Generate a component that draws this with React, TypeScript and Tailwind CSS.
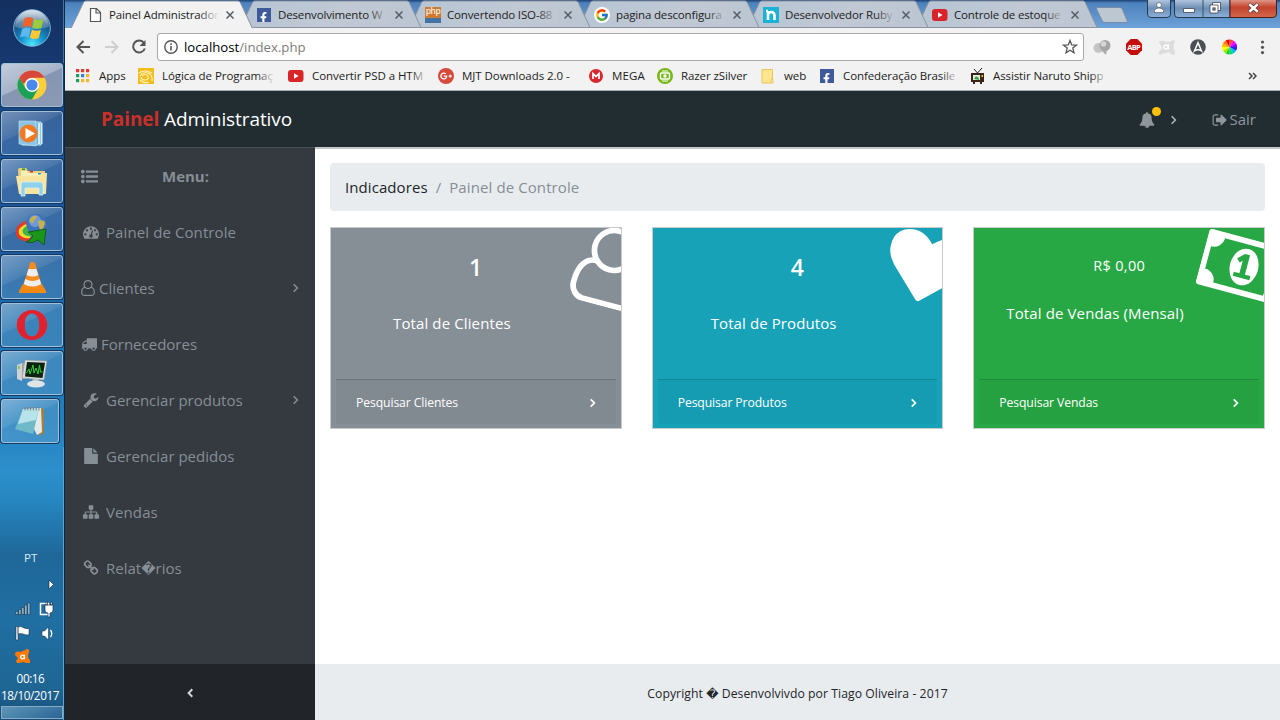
import type { ReactNode } from "react";
import { FaFacebookF, FaGooglePlusG } from "react-icons/fa";
import { FcGoogle } from "react-icons/fc";

const P = {
  bell: "M912 1696q0-16-16-16-59 0-101.5-42.5t-42.5-101.5q0-16-16-16t-16 16q0 73 51.5 124.5t124.5 51.5q16 0 16-16zm816-288q0 52-38 90t-90 38h-448q0 106-75 181t-181 75-181-75-75-181h-448q-52 0-90-38t-38-90q50-42 91-88t85-119.5 74.5-158.5 50-206 19.5-260q0-152 117-282.5t307-158.5q-8-19-8-39 0-40 28-68t68-28 68 28 28 68q0 20-8 39 190 28 307 158.5t117 282.5q0 139 19.5 260t50 206 74.5 158.5 85 119.5 91 88z",
  signOut:
    "M704 1440q0 4 1 20t.5 26.5-3 23.5-10 19.5-20.5 6.5h-320q-119 0-203.5-84.5t-84.5-203.5v-704q0-119 84.5-203.5t203.5-84.5h320q13 0 22.5 9.5t9.5 22.5q0 4 1 20t.5 26.5-3 23.5-10 19.5-20.5 6.5h-320q-66 0-113 47t-47 113v704q0 66 47 113t113 47h312l11.5 1 11.5 3 8 5.5 7 9 2 13.5zm928-544q0 26-19 45l-544 544q-19 19-45 19t-45-19-19-45v-288h-448q-26 0-45-19t-19-45v-384q0-26 19-45t45-19h448v-288q0-26 19-45t45-19 45 19l544 544q19 19 19 45z",
  list: "M384 1408q0 80-56 136t-136 56-136-56-56-136 56-136 136-56 136 56 56 136zm0-512q0 80-56 136t-136 56-136-56-56-136 56-136 136-56 136 56 56 136zm1408 416v192q0 13-9.5 22.5t-22.5 9.5h-1216q-13 0-22.5-9.5t-9.5-22.5v-192q0-13 9.5-22.5t22.5-9.5h1216q13 0 22.5 9.5t9.5 22.5zm-1408-928q0 80-56 136t-136 56-136-56-56-136 56-136 136-56 136 56 56 136zm1408 416v192q0 13-9.5 22.5t-22.5 9.5h-1216q-13 0-22.5-9.5t-9.5-22.5v-192q0-13 9.5-22.5t22.5-9.5h1216q13 0 22.5 9.5t9.5 22.5zm0-512v192q0 13-9.5 22.5t-22.5 9.5h-1216q-13 0-22.5-9.5t-9.5-22.5v-192q0-13 9.5-22.5t22.5-9.5h1216q13 0 22.5 9.5t9.5 22.5z",
  gauge:
    "M384 1152q0-53-37.5-90.5t-90.5-37.5-90.5 37.5-37.5 90.5 37.5 90.5 90.5 37.5 90.5-37.5 37.5-90.5zm192-448q0-53-37.5-90.5t-90.5-37.5-90.5 37.5-37.5 90.5 37.5 90.5 90.5 37.5 90.5-37.5 37.5-90.5zm428 481l101-382q6-26-7.5-48.5t-38.5-29.5-48 6.5-30 39.5l-101 382q-60 5-107 43.5t-63 98.5q-20 77 20 146t117 89 146-20 89-117q16-60-6-117t-72-91zm660-33q0-53-37.5-90.5t-90.5-37.5-90.5 37.5-37.5 90.5 37.5 90.5 90.5 37.5 90.5-37.5 37.5-90.5zm-640-640q0-53-37.5-90.5t-90.5-37.5-90.5 37.5-37.5 90.5 37.5 90.5 90.5 37.5 90.5-37.5 37.5-90.5zm448 192q0-53-37.5-90.5t-90.5-37.5-90.5 37.5-37.5 90.5 37.5 90.5 90.5 37.5 90.5-37.5 37.5-90.5zm320 448q0 261-141 483-19 29-54 29h-1402q-35 0-54-29-141-221-141-483 0-182 71-348t191-286 286-191 348-71 348 71 286 191 191 286 71 348z",
  truck:
    "M640 1408q0-52-38-90t-90-38-90 38-38 90 38 90 90 38 90-38 38-90zm-384-512h384v-256h-158q-13 0-22 9l-195 195q-9 9-9 22v30zm1280 512q0-52-38-90t-90-38-90 38-38 90 38 90 90 38 90-38 38-90zm256-1088v1024q0 15-4 26.5t-13.5 18.5-16.5 11.5-23.5 6-22.5 2-25.5 0-22.5-.5q0 106-75 181t-181 75-181-75-75-181h-384q0 106-75 181t-181 75-181-75-75-181h-64q-3 0-22.5.5t-25.5 0-22.5-2-23.5-6-16.5-11.5-13.5-18.5-4-26.5q0-26 19-45t45-19v-320q0-8-.5-35t0-38 2.5-34.5 6.5-37 14-30.5 22.5-30l198-198q19-19 50.5-32t58.5-13h160v-192q0-26 19-45t45-19h1024q26 0 45 19t19 45z",
  wrench:
    "M448 1472q0-26-19-45t-45-19-45 19-19 45 19 45 45 19 45-19 19-45zm644-420l-682 682q-37 37-90 37-52 0-91-37l-106-108q-38-36-38-90 0-53 38-91l681-681q39 98 114.5 173.5t173.5 114.5zm634-435q0 39-23 106-47 134-164.5 217.5t-258.5 83.5q-185 0-316.5-131.5t-131.5-316.5 131.5-316.5 316.5-131.5q58 0 121.5 16.5t107.5 46.5q16 11 16 28t-16 28l-293 169v224l193 107q5-3 79-48.5t135.5-81 70.5-35.5q15 0 23.5 10t8.5 25z",
  file: "M1152 512v-472q22 14 36 28l408 408q14 14 28 36h-472zm-128 32q0 40 28 68t68 28h544v1056q0 40-28 68t-68 28h-1344q-40 0-68-28t-28-68v-1600q0-40 28-68t68-28h800v544z",
  sitemap:
    "M1792 1248v320q0 40-28 68t-68 28h-320q-40 0-68-28t-28-68v-320q0-40 28-68t68-28h96v-192h-512v192h96q40 0 68 28t28 68v320q0 40-28 68t-68 28h-320q-40 0-68-28t-28-68v-320q0-40 28-68t68-28h96v-192h-512v192h96q40 0 68 28t28 68v320q0 40-28 68t-68 28h-320q-40 0-68-28t-28-68v-320q0-40 28-68t68-28h96v-192q0-52 38-90t90-38h512v-192h-96q-40 0-68-28t-28-68v-320q0-40 28-68t68-28h320q40 0 68 28t28 68v320q0 40-28 68t-68 28h-96v192h512q52 0 90 38t38 90v192h96q40 0 68 28t28 68z",
  link: "M1520 1216q0-40-28-68l-208-208q-28-28-68-28-42 0-72 32 3 3 19 18.5t21.5 21.5 15 19 13 25.5 3.5 27.5q0 40-28 68t-68 28q-15 0-27.5-3.5t-25.5-13-19-15-21.5-21.5-18.5-19q-33 31-33 73 0 40 28 68l206 207q27 27 68 27 40 0 68-26l147-146q28-28 28-67zm-703-705q0-40-28-68l-206-207q-28-28-68-28-39 0-68 27l-147 146q-28 28-28 67 0 40 28 68l208 208q27 27 68 27 42 0 72-31-3-3-19-18.5t-21.5-21.5-15-19-13-25.5-3.5-27.5q0-40 28-68t68-28q15 0 27.5 3.5t25.5 13 19 15 21.5 21.5 18.5 19q33-31 33-73zm895 705q0 120-85 203l-147 146q-83 83-203 83-121 0-204-85l-206-207q-83-83-83-203 0-123 88-209l-88-88q-86 88-208 88-120 0-204-84l-208-208q-84-84-84-204t85-203l147-146q83-83 203-83 121 0 204 85l206 207q83 83 83 203 0 123-88 209l88 88q86-88 208-88 120 0 204 84l208 208q84 84 84 204z",
  user: "M1329 784q47 14 89.5 38t89 73 79.5 115.5 55 172 22 236.5q0 154-100 263.5t-241 109.5h-854q-141 0-241-109.5t-100-263.5q0-131 22-236.5t55-172 79.5-115.5 89-73 89.5-38q-79-125-79-272 0-104 40.5-198.5t109.5-163.5 163.5-109.5 198.5-40.5 198.5 40.5 163.5 109.5 109.5 163.5 40.5 198.5q0 147-79 272zm-433-656q-159 0-271.5 112.5t-112.5 271.5 112.5 271.5 271.5 112.5 271.5-112.5 112.5-271.5-112.5-271.5-271.5-112.5zm427 1536q88 0 150.5-71.5t62.5-173.5q0-239-78.5-377t-225.5-145q-145 127-336 127t-336-127q-147 7-225.5 145t-78.5 377q0 102 62.5 173.5t150.5 71.5h854z",
  heart:
    "M896 1664q-26 0-44-18l-624-602q-10-8-27.5-26t-55.5-65.5-68-97.5-53.5-121-23.5-138q0-220 127-344t351-124q62 0 126.5 21.5t120 58 95.5 68.5 76 68q36-36 76-68t95.5-68.5 120-58 126.5-21.5q224 0 351 124t127 344q0 221-229 450l-623 600q-18 18-44 18z",
  money:
    "M768 1152h384v-96h-128v-448h-114l-148 137 77 80q42-37 55-57h2v288h-128v96zm512-256q0 70-21 142t-59.5 134-101.5 101-138 39-138-39-101.5-101-59.5-134-21-142 21-142 59.5-134 101.5-101 138-39 138 39 101.5 101 59.5 134 21 142zm512 256v-512q-106 0-181-75t-75-181h-1152q0 106-75 181t-181 75v512q106 0 181 75t75 181h1152q0-106 75-181t181-75zm128-832v1152q0 26-19 45t-45 19h-1792q-26 0-45-19t-19-45v-1152q0-26 19-45t45-19h1792q26 0 45 19t19 45z",
};

function Icon({ d, className = "", box = "0 0 1792 1792" }: { d: string; className?: string; box?: string }) {
  return (
    <svg viewBox={box} className={`shrink-0 ${className}`} fill="currentColor" fillRule="evenodd">
      <path d={d} />
    </svg>
  );
}

function Chevron({ className = "", weight = 1.4 }: { className?: string; weight?: number }) {
  return (
    <svg viewBox="0 0 8 10" className={`h-2.5 w-2 shrink-0 ${className}`} fill="none" stroke="currentColor">
      <path d="M1.700 1.300 5.400 5l-3.700 3.700" strokeWidth={weight} />
    </svg>
  );
}

/* ---------- Windows taskbar ---------- */

function Orb() {
  return (
    <svg viewBox="0 0 40 40" className="size-10">
      <defs>
        <radialGradient id="orb" cx=".5" cy=".95" r=".9">
          <stop offset="0" stopColor="#4fe6ff" />
          <stop offset=".35" stopColor="#1593cf" />
          <stop offset=".75" stopColor="#174d80" />
          <stop offset="1" stopColor="#5f86a6" />
        </radialGradient>
        <linearGradient id="shine" x1="0" y1="0" x2="0" y2="1">
          <stop offset="0" stopColor="#fff" stopOpacity=".75" />
          <stop offset="1" stopColor="#fff" stopOpacity=".15" />
        </linearGradient>
      </defs>
      <circle cx="20" cy="20" r="18.3" fill="url(#orb)" stroke="#7fb3d4" strokeWidth="1" />
      <path d="M3 19a17 17 0 0 1 34 0q-17 5-34 0z" fill="url(#shine)" />
      <path d="M12.500 10.500q4.500-2.500 8.700-.3l-2.200 9q-4-2-8.500.2z" fill="#f0622a" />
      <path d="M22.300 11q4 2.300 9.200 0l-2.200 8.800q-4.500 2.200-9.100-.2z" fill="#9ccb3b" />
      <path d="M10.200 21q4.200-2.200 8.500-.2l-2.100 8.600q-4.200-2.100-8.600.2z" fill="#5cb8ee" />
      <path d="M19.900 21.500q4.300 2.300 9 .2l-2.100 8.200q-4.500 2.100-9-.1z" fill="#fdc833" />
    </svg>
  );
}

const taskIcons: ReactNode[] = [
  <g key="chrome">
    <circle cx="16" cy="16" r="14.500" fill="#fccd3c" />
    <path d="M3.440 8.750A14.500 14.500 0 0 1 28.560 8.750H16a7.250 7.250 0 0 0-6.700 4.500L7 15z" fill="#d8463c" />
    <path d="M3.440 8.750A14.500 14.500 0 0 0 16 30.500l6.300-10.900H16L9.720 19.600z" fill="#1ba158" />
    <circle cx="16" cy="16" r="7" fill="#fff" />
    <circle cx="16" cy="16" r="5.600" fill="#4a87ee" />
  </g>,
  <g key="player">
    <path d="M6 5h19v23H6z" fill="#6fb5d8" stroke="#b6e0f2" />
    <path d="M22 6h2v21h-2zM25 6h1.500v21H25z" fill="#d3eef9" />
    <path d="M3 4h17v25L3 27z" fill="#8cc5e2" stroke="#c8e9f7" strokeWidth=".6" />
    <circle cx="12.500" cy="16.500" r="9" fill="#f17a22" />
    <path d="M9.500 11v11l9.500-5.500z" fill="#fff" />
  </g>,
  <g key="folders">
    <path d="M2 5q0-2 2-2h6l2 3h17v22H3z" fill="#e9cf7f" />
    <path d="M5 6h6l1 2h17v3H5z" fill="#fbf0b8" />
    <path d="M6 3.500h3V5H6z" fill="#1da01d" />
    <path d="M14 6h3v1.500h-3z" fill="#d33" />
    <path d="M22 8h3.500v1.500H22z" fill="#1c8fe0" />
    <path d="M0 11h24l1-3h6l-1 21H3z" fill="#f7e59f" />
    <path d="M5 31V19q0-2 2-2h17q3 0 3 3v10h-4v-7H9v8z" fill="#8fd0ea" stroke="#d7f3ff" strokeWidth=".8" />
  </g>,
  <g key="downloader">
    <path d="M10 8Q-2 12 0 22q3 7 13 6l2-4Q5 24 6 17q1-4 6-5z" fill="#e23a2a" />
    <path d="M10 11Q1 15 3 21q3 5 11 4l1-3q-7 0-6-5 1-3 5-4z" fill="#f3d72d" />
    <path d="M11 13q-6 3-4 7 3 4 9 3l1-3q-5 0-4-3z" fill="#3ab54a" />
    <circle cx="20.500" cy="11" r="10.300" fill="#3f73bc" />
    <circle cx="19" cy="8" r="6" fill="#8fb8ea" opacity=".6" />
    <path d="M14 6q3-4 7-3 0 3-3 4 0 3-2 3-3-1-2-4zM22 8q5-2 7 1 0 5-4 8-3-3-2-5z" fill="#c9b04e" />
    <path d="m12 19 18-3-2 16-6-5q-5 4-12 2 5-2 7-6z" fill="#1a951a" stroke="#0c4c0c" strokeWidth=".7" />
  </g>,
  <g key="cone">
    <path d="M7 23h19l4 7v2H3v-2z" fill="#f58a12" />
    <path d="M14 2q2.500-2 5 0l7 23q-9.500 5-19 0z" fill="#f78c1e" />
    <path d="M12.500 8h8l1.800 6q-5.500 3-11.700 0zM9.300 18q7 4 14.300 0l1.600 5q-8.500 5-17.500 0z" fill="#eee" />
  </g>,
  <g key="opera">
    <path
      d="M16 1C7.500 1 .8 7.500.8 16S7.500 31 16 31s15.200-6.500 15.200-15S24.500 1 16 1zm0 3.500c4.800 0 7.300 5 7.300 11.500S20.800 27.500 16 27.500 8.700 22.500 8.700 16 11.200 4.500 16 4.500z"
      fill="#e3202c"
      fillRule="evenodd"
    />
  </g>,
  <g key="monitor">
    <path d="M1 8l5-2v18l-5-2z" fill="#cfd3d5" />
    <path d="M2 9h2v3H2z" fill="#8bc53f" />
    <path d="M6 6h5v16H6z" fill="#9fa5a8" />
    <path d="m9 3 22 1-3 19-22-2z" fill="#d9dcdc" stroke="#90979b" strokeWidth=".6" />
    <path d="m11 5 18 .700-2.500 15.300-17.500-1.600z" fill="#0b2410" />
    <path d="m10.500 16 2.500-4 1 5 3-9 1 8 2-5 2 6 1.500-9 1 7h2" fill="none" stroke="#2ed13a" />
    <path d="M17 22h5l2 4h-8z" fill="#b7bdbf" />
    <ellipse cx="20" cy="27" rx="9" ry="3.500" fill="#e0e4e5" />
  </g>,
  <g key="notepad">
    <path d="m26 3 4 1v24l-5 3z" fill="#a5803c" />
    <path d="m10 4 17-1 1 24-5 3z" fill="#e4eaea" />
    <path d="M9 4h16l-6 25-18-5z" fill="#6fb9c8" />
    <path d="M9 4h16l-3 11-18 4z" fill="#b7e3ea" />
    <path d="M11 2v3.500m2.800-3.500v3.500m2.800-3.500v3.500m2.800-3.500v3.500m2.800-3.500v3.500m2.800-3.500v3.500" stroke="#777" strokeWidth=".9" />
  </g>,
];

function Taskbar() {
  return (
    <aside className="flex w-[65px] shrink-0 flex-col border-r border-[#0d2a45] bg-[linear-gradient(180deg,#13305f_0px,#16386f_60px,#1b5296_140px,#1b5799_240px,#1e70ae_320px,#237fbd_420px,#2d8fcb_470px,#2687c0_500px,#1f6799_555px,#206fa3_620px,#1e6593_690px,#174d78_720px)]">
      <div className="flex h-[63px] items-start justify-center border-r border-[#4c7199] pt-2">
        <Orb />
      </div>
      {taskIcons.map((icon, i) => (
        <div
          key={i}
          className={`mb-1 ml-px flex h-11 items-center justify-center rounded-[3px] border border-[#9fc0dc] shadow-[0_0_0_1px_#173a62] ${
            i === 7 ? "w-[58px]" : "w-[62px]"
          } ${
            i === 0
              ? "bg-[linear-gradient(155deg,#c3cddc_0%,#a5b2c8_45%,#8595b2_46%,#8c9ab5_100%)]"
              : "bg-[linear-gradient(155deg,#ffffff66_0%,#ffffff33_42%,#ffffff22_43%,#ffffff1c_100%)]"
          }`}
        >
          <svg viewBox="0 0 32 32" className="size-8">
            {icon}
          </svg>
        </div>
      ))}
      <div className="flex flex-1 flex-col border-r border-[#5fa5cb] font-['Open_Sans',sans-serif] text-white">
        <div className="mt-[103px] pl-6 text-[11.500px] leading-4 text-[#dcebf4]">PT</div>
        <svg viewBox="0 0 64 94" className="mt-[3px] h-[94px] w-16">
          <path d="M49 11l4.500 4.500L49 20z" fill="#fff" stroke="#123" strokeWidth=".6" />
          <g fill="#8fb0c5" stroke="#143a58" strokeWidth=".6">
            <path d="M15.500 42.500h2.500v3h-2.500zM18.500 40.500h2.500v5h-2.500zM21.500 38.500H24v7h-2.500zM24.500 36h2.500v9.500h-2.500zM27.500 34H30v11.500h-2.500z" />
          </g>
          <path d="M40.500 34.500h8v11h-8z" fill="none" stroke="#fff" strokeWidth="1.500" />
          <path d="M45 36h8v5q0 3-3 3v4h-2v-4q-3 0-3-3zM46 33h1.500v3H46zM50.500 33H52v3h-1.500z" fill="#fff" stroke="#123" strokeWidth=".6" />
          <path d="M16 57.500h2v13.500h-2zM18 58q3-1 5 .5t6 1V66q-4 0-6-1t-5 0z" fill="#fff" stroke="#123" strokeWidth=".5" />
          <path d="M42 62h2.500l4-4v13l-4-4H42z" fill="#fff" stroke="#123" strokeWidth=".5" />
          <path d="M50.500 61q2.500 3.500 0 7" fill="none" stroke="#fff" strokeWidth="1.300" />
          <g transform="translate(23 88)">
            <path d="M-7-5q2-1 4 0l3-1 4-2q3 0 2 3L5-1q0 2 2 4l0 3q-2 2-4 0L0 5l-4 1q-2 1-3-2l2-3-3-3q0-2 1-3z" fill="#ff7800" />
            <circle cx="-.5" cy="0" r="1.800" fill="none" stroke="#fff" strokeWidth="1.300" />
            <path d="M1.500-2.300v4.500" stroke="#fff" strokeWidth="1.200" />
          </g>
        </svg>
        <div className="mt-[7px] text-center text-[11.700px] leading-[17px] tracking-[-0.4px]">
          <div className="pr-0.5">00:16</div>
          <div className="whitespace-nowrap pr-[3px]">18/10/2017</div>
        </div>
        <div className="mb-px ml-px mt-auto h-[13px] border border-[#87abc5] bg-[linear-gradient(155deg,#5f95ba,#2b6593)]" />
      </div>
    </aside>
  );
}

/* ---------- Browser chrome ---------- */

const YouTube = () => (
  <svg viewBox="0 0 16 16" className="size-4 shrink-0">
    <rect x="0" y="2" width="15.500" height="12" rx="3" fill="#d9252a" />
    <path d="M6 5.300v5.400L10.500 8z" fill="#fff" />
  </svg>
);

const Facebook = ({ className }: { className: string }) => (
  <span className={`flex shrink-0 items-end justify-end overflow-hidden bg-[#3f5a9b] text-white ${className}`}>
    <FaFacebookF className="-mb-px mr-0.5 size-[11px]" />
  </span>
);

const tabs: { title: string; icon: ReactNode }[] = [
  {
    title: "Painel Administrador",
    icon: (
      <svg viewBox="0 0 16 16" className="size-4">
        <path d="M3.500 1.500h6l4 4v9h-10zM9 2v4h4" fill="#fff" stroke="#555" strokeWidth="1.200" />
      </svg>
    ),
  },
  { title: "Desenvolvimento W", icon: <Facebook className="size-3.5" /> },
  {
    title: "Convertendo ISO-88",
    icon: (
      <span className="flex size-4 items-start justify-center border-b-[5px] border-[#4373a5] bg-[#cf7a31] font-['Liberation_Mono',monospace] text-[9px] leading-[10px] tracking-[-0.5px] text-white">
        php
      </span>
    ),
  },
  {
    title: "pagina desconfigura",
    icon: (
      <span className="flex size-4 items-center justify-center rounded-full bg-white">
        <FcGoogle className="size-3.5" />
      </span>
    ),
  },
  {
    title: "Desenvolvedor Ruby",
    icon: (
      <svg viewBox="0 0 16 16" className="size-4">
        <path d="M0 0h16v16H0z" fill="#1bb2d3" />
        <path d="M5 13V4M5 8q.5-3 3.200-3T11.500 8v5M3 4h2" fill="none" stroke="#fff" strokeWidth="2.600" />
      </svg>
    ),
  },
  { title: "Controle de estoque", icon: <YouTube /> },
];

function TabStrip() {
  return (
    <div className="relative flex h-7 overflow-hidden bg-[linear-gradient(180deg,#1d4175_0px,#4d82bd_3px,#6ca2d8_100%)] pl-1.5">
      {tabs.map((t, i) => (
        <div key={t.title} className="relative h-7 w-[169px] shrink-0" style={{ zIndex: 10 - i }}>
          <svg viewBox="0 0 182 28" className="absolute left-0 top-0 h-7 w-[182px] max-w-none">
            <defs>
              <linearGradient id="tabfill" x1="0" x2="1" y1="0" y2=".2">
                <stop offset="0" stopColor="#b5c4d4" />
                <stop offset=".6" stopColor="#c0c9d4" />
                <stop offset="1" stopColor="#bcc6d2" />
              </linearGradient>
            </defs>
            <path
              d="M0 28.500 12.500 2.500Q13.300 1 15 1H167q1.500 0 2.300 1.500L181.500 28.500z"
              fill={i === 0 ? "#f2f2f2" : "url(#tabfill)"}
              stroke="#8b939e"
            />
            {i > 0 && <path d="M0 27.500h182" stroke="#8b939e" />}
          </svg>
          <div className="relative flex h-full items-center pt-0.5">
            <span className="ml-4 flex w-4 justify-center">{t.icon}</span>
            <span className="relative ml-1.5 w-[110px] whitespace-nowrap text-[11.500px] tracking-[-0.15px] text-[#222]">
              {t.title}
              <span
                className={`absolute inset-y-0 right-0 w-5 bg-linear-to-r from-transparent ${
                  i === 0 ? "to-[#f2f2f2]" : "to-[#bfc8d3]"
                }`}
              />
            </span>
            <svg viewBox="0 0 8 8" className="ml-[7px] size-2">
              <path d="M.5.5l7 7m0-7l-7 7" stroke="#555c63" strokeWidth="1.500" />
            </svg>
          </div>
        </div>
      ))}
      <svg viewBox="0 0 34 18" className="ml-[10px] mt-1.5 h-[18px] w-[34px]">
        <path d="M3 1.500h22q1.500 0 2.300 1.500l5 12q.7 1.500-1 1.500H10q-2 0-2.700-1.500L1.500 3Q1 1.500 3 1.500z" fill="#bdc7d2" stroke="#788ba3" />
      </svg>
      <svg viewBox="0 0 132 19" className="absolute right-0.5 top-0 h-[19px] w-[132px]">
        <defs>
          <linearGradient id="winbtn" x1="0" x2="0" y1="0" y2="1">
            <stop offset="0" stopColor="#b8cbe1" />
            <stop offset=".5" stopColor="#6d8fb5" />
            <stop offset="1" stopColor="#8db1d9" />
          </linearGradient>
          <linearGradient id="closebtn" x1="0" x2="0" y1="0" y2="1">
            <stop offset="0" stopColor="#e0a193" />
            <stop offset=".45" stopColor="#c4432c" />
            <stop offset="1" stopColor="#d3694d" />
          </linearGradient>
        </defs>
        <path d="M1.500-1v15q0 3.500 3.500 3.500H21q3.500 0 3.500-3.500V-1z" fill="url(#winbtn)" stroke="#27384d" />
        <path d="M28.500-1v15q0 3.500 3.500 3.500H84V-1z" fill="url(#winbtn)" stroke="#27384d" />
        <path d="M84-1v18.500h43q3.500 0 3.500-3.500V-1z" fill="url(#closebtn)" stroke="#4b1c18" />
        <path d="M57 0v17" stroke="#3a4f69" />
        <circle cx="13" cy="5" r="2.500" fill="#fff" stroke="#445" strokeWidth=".6" />
        <path d="M8.500 12.500v-2q1-2.500 4.500-2.500t4.500 2.500v2z" fill="#fff" stroke="#445" strokeWidth=".6" />
        <path d="M37.500 8.500h11v4h-11z" fill="#fff" stroke="#445" strokeWidth=".8" />
        <path d="M66.500 2.500h8v8h-8z" fill="#fff" stroke="#445" strokeWidth=".8" />
        <path d="M64 5h8v8h-8z" fill="#fff" stroke="#445" strokeWidth=".8" />
        <path d="M66.700 7.700h2.600v2.600h-2.600z" fill="#5a6f8a" stroke="#445" strokeWidth=".5" />
        <path d="M103 4l9 8m0-8l-9 8" stroke="#533" strokeWidth="3.800" />
        <path d="M103.300 4.200l8.400 7.600m0-7.600l-8.400 7.600" stroke="#fff" strokeWidth="2.500" />
      </svg>
    </div>
  );
}

function Toolbar() {
  return (
    <div className="flex h-[34px] items-center bg-[#f2f2f2] pt-1">
      <svg viewBox="0 0 92 28" className="h-7 w-[92px] shrink-0" fill="none" strokeWidth="2">
        <path d="M25 14H12.500m6-6-6 6 6 6" stroke="#555" />
        <path d="M40 14h12.500m-6-6 6 6-6 6" stroke="#cfcfcf" />
        <path d="M79 10a6 6 0 1 0 .8 5.500" stroke="#555" />
        <path d="M80.500 7v6h-6z" fill="#555" />
      </svg>
      <div className="flex h-7 w-[927px] shrink-0 items-center rounded-[3px] border border-[#a8a8a8] bg-white">
        <svg viewBox="0 0 14 14" className="ml-1.5 size-3.5">
          <circle cx="7" cy="7" r="6.200" fill="none" stroke="#555" strokeWidth="1.400" />
          <path d="M6.200 6h1.600v4.500H6.200zM6.200 3.200h1.600v1.700H6.200z" fill="#555" />
        </svg>
        <span className="ml-1.5 text-[13.200px] leading-5 text-black">
          localhost<span className="text-[#7c7c7c]">/index.php</span>
        </span>
        <svg viewBox="0 0 16 16" className="ml-auto mr-[5px] size-4">
          <path d="m8 1.500 1.700 4.400 4.800.2-3.700 3 1.200 4.700L8 11.200l-4 2.600 1.200-4.700-3.700-3 4.800-.2z" fill="none" stroke="#555" strokeWidth="1.300" />
        </svg>
      </div>
      <svg viewBox="0 0 196 28" className="h-7 w-[196px] shrink-0">
        <circle cx="14.500" cy="15" r="5" fill="#c4c4c4" />
        <path d="M17.500 17.500l4.500 4.500 1-5z" fill="#aaa" />
        <circle cx="21" cy="12.500" r="5.500" fill="#a5a5a5" />
        <circle cx="19.500" cy="11" r="2.800" fill="#d5d5d5" />
        <path d="M46.700 6h6.600l4.700 4.700v6.600L53.300 22h-6.600L42 17.300v-6.600z" fill="#c60b0b" />
        <text x="50" y="17" textAnchor="middle" fontFamily="Open Sans" fontWeight="700" fontSize="7.500" fill="#fff" textLength="13.500">
          ABP
        </text>
        <path d="M76 8q4-1 6 1 2-1 4 0l3-2q3 0 1 4-1 3 0 5 2 5 0 6-3 0-5-3-3 1-5 1-4 3-5 1-1-3 3-5 0-3-2-5-2-2 0-3z" fill="#dcdcdc" />
        <circle cx="82" cy="14" r="2" fill="none" stroke="#fff" strokeWidth="1.300" />
        <path d="M84.500 11.500v5" stroke="#fff" strokeWidth="1.200" />
        <circle cx="114" cy="14" r="7.800" fill="#494f55" />
        <path d="M110.500 18 114 9.700l3.500 8.300q-3.500-2.500-7 0z" fill="none" stroke="#fff" strokeWidth="1.500" />
        <g transform="translate(145.500 14)">
          {["#f44", "#f0f", "#90f", "#22f", "#0bd", "#0d8", "#2c2", "#9e0", "#ff0", "#fb0", "#f70", "#e00"].map((c, k) => (
            <path key={c} d="M0 0-2 -7.300A7.600 7.600 0 0 1 2-7.300z" fill={c} transform={`rotate(${k * 30 + 15})`} />
          ))}
        </g>
        <circle cx="178.500" cy="9" r="1.600" fill="#555" />
        <circle cx="178.500" cy="14.300" r="1.600" fill="#555" />
        <circle cx="178.500" cy="19.600" r="1.600" fill="#555" />
      </svg>
    </div>
  );
}

const appColors = ["#e33b2e", "#e33b2e", "#e33b2e", "#1aa05a", "#3f7de0", "#f3b52c", "#1aa05a", "#f3b52c", "#f3b52c"];

const bookmarks: { label: string; w: string; text: string; fade?: boolean; icon: ReactNode }[] = [
  {
    label: "Apps",
    w: "w-[62px]",
    text: "-ml-px",
    icon: (
      <svg viewBox="0 0 16 16" className="size-4">
        {appColors.map((c, i) => (
          <rect key={i} x={(i % 3) * 5} y={1 + Math.floor(i / 3) * 5} width="3.200" height="3.200" fill={c} />
        ))}
      </svg>
    ),
  },
  {
    label: "Lógica de Programaç",
    w: "w-[150px]",
    text: "w-[113px]",
    fade: true,
    icon: (
      <svg viewBox="0 0 16 16" className="size-4">
        <path d="M0 0h16v16H0z" fill="#f3bd1b" />
        <path d="M1 5q6-4 13 0M2 8q2-4 8-3 5 2 4 8M4 8q3-3 6 0 1 4-3 4t-4-3M2 12q4 4 9 2" fill="none" stroke="#fff3c4" strokeWidth="1.100" />
      </svg>
    ),
  },
  {
    label: "Convertir PSD a HTM",
    w: "w-[150px]",
    text: "w-[116px]",
    fade: true,
    icon: <YouTube />,
  },
  {
    label: "MJT Downloads 2.0 -",
    w: "w-[151px]",
    text: "w-[113px]",
    icon: (
      <span className="flex size-4 items-center justify-center rounded-full bg-[#d64a3c] text-white">
        <FaGooglePlusG className="size-3" />
      </span>
    ),
  },
  {
    label: "MEGA",
    w: "w-[68px]",
    text: "-ml-px tracking-[0.1px]",
    icon: (
      <svg viewBox="0 0 16 16" className="size-4">
        <circle cx="7" cy="8" r="7" fill="#d9272e" />
        <path d="M4 11V5.500l3 3 3-3V11" fill="none" stroke="#fff" strokeWidth="1.700" />
      </svg>
    ),
  },
  {
    label: "Razer zSilver",
    w: "w-[104px]",
    text: "tracking-[-0.1px]",
    icon: (
      <svg viewBox="0 0 16 16" className="size-4">
        <circle cx="8" cy="8" r="8" fill="#74b816" />
        <rect x="3.500" y="5" width="9" height="6" rx="1" fill="none" stroke="#fff" strokeWidth="1.500" />
        <circle cx="8" cy="8" r="1.700" fill="#fff" />
        <path d="M5 3h6M5 13h6" stroke="#fff" />
      </svg>
    ),
  },
  {
    label: "web",
    w: "w-[59px]",
    text: "-ml-px",
    icon: (
      <svg viewBox="0 0 16 16" className="size-4">
        <path d="M1 1.500h10.500V11h-1v4H1z" fill="#fde68f" stroke="#e9c55b" />
        <path d="M10 11h2v4h-2z" fill="#fff0b4" stroke="#e9c55b" />
      </svg>
    ),
  },
  {
    label: "Confederação Brasile",
    w: "w-[150px]",
    text: "-ml-px w-[116px] tracking-[-0.1px]",
    fade: true,
    icon: <Facebook className="mr-0.5 size-3.5" />,
  },
  {
    label: "Assistir Naruto Shipp",
    w: "w-[140px]",
    text: "-ml-px w-[115px] tracking-[-0.1px]",
    fade: true,
    icon: (
      <svg viewBox="0 0 16 16" className="size-4">
        <path d="M4 1l3.500 4L12 0" fill="none" stroke="#222" />
        <path d="M1 5h13v9H1zM3 14h2v2H3zM10 14h2v2h-2z" fill="#3a2415" />
        <path d="M3 7h7v5H3z" fill="#e8eedf" />
        <path d="M4 11l2-3 3 2v2z" fill="#3da04a" />
        <path d="M11.500 7h1.500v2h-1.500z" fill="#f2c22b" />
      </svg>
    ),
  },
];

function Bookmarks() {
  return (
    <div className="flex h-[29px] items-center border-b border-[#a9adb0] bg-[#f2f2f2] pl-[11px] text-[11.500px] tracking-[-0.05px] text-[#1c1c1c]">
      {bookmarks.map((b) => (
        <div key={b.label} className={`flex shrink-0 items-center ${b.w}`}>
          {b.icon}
          <span className="w-2 shrink-0" />
          <span className={`relative block shrink-0 whitespace-nowrap ${b.text}`}>
            {b.label}
            {b.fade && <span className="absolute inset-y-0 right-0 w-[18px] bg-linear-to-r from-transparent to-[#f2f2f2]" />}
          </span>
        </div>
      ))}
      <svg viewBox="0 0 9 8" className="ml-auto mr-[23px] h-2 w-[9px]">
        <path d="M1 1l3 3-3 3M5 1l3 3-3 3" fill="none" stroke="#444" strokeWidth="1.500" />
      </svg>
    </div>
  );
}

/* ---------- Admin page ---------- */

const menu: { label: ReactNode; icon: string; iconClass: string; textClass: string; arrow?: boolean }[] = [
  { label: "Painel de Controle", icon: P.gauge, iconClass: "ml-[18px] size-4", textClass: "ml-[7px] tracking-[0.1px]" },
  { label: "Clientes", icon: P.user, iconClass: "ml-[15px] size-4", textClass: "ml-[3px]", arrow: true },
  { label: "Fornecedores", icon: P.truck, iconClass: "ml-4 size-4", textClass: "ml-1" },
  { label: "Gerenciar produtos", icon: P.wrench, iconClass: "ml-[18px] size-4", textClass: "ml-[7px]", arrow: true },
  { label: "Gerenciar pedidos", icon: P.file, iconClass: "ml-[18px] size-4", textClass: "ml-[7px]" },
  { label: "Vendas", icon: P.sitemap, iconClass: "ml-[18px] size-4", textClass: "ml-[7px] tracking-[0.1px]" },
  {
    label: (
      <>
        Relat<span className="font-['DejaVu_Sans',sans-serif] text-[14px]">{"\uFFFD"}</span>rios
      </>
    ),
    icon: P.link,
    iconClass: "ml-[18px] size-4",
    textClass: "ml-[7px]",
  },
];

function Sidebar() {
  return (
    <nav className="flex w-[250px] shrink-0 flex-col border-t border-[#495156] bg-[#343a40] text-[15px] text-[#868e96]">
      <div className="flex h-14 items-center">
        <Icon d={P.list} className="ml-4 size-[17px]" />
        <span className="ml-16 font-bold">Menu:</span>
      </div>
      {menu.map((m, i) => (
        <div key={i} className="flex h-14 items-center">
          <Icon d={m.icon} className={m.iconClass} />
          <span className={`whitespace-nowrap ${m.textClass}`}>{m.label}</span>
          {m.arrow && <Chevron className="ml-auto mr-[15px]" weight={1.5} />}
        </div>
      ))}
      <div className="mt-auto flex h-14 items-center justify-center bg-[#212529] pt-0.5">
        <Chevron className="mr-px rotate-180 text-[#ced4da]" weight={2} />
      </div>
    </nav>
  );
}

function Card({
  color,
  children,
  icon,
  link,
}: {
  color: string;
  children: ReactNode;
  icon: ReactNode;
  link: string;
}) {
  return (
    <section className={`relative flex h-[202px] flex-col overflow-hidden border border-[#c8cbcd] px-[5px] pb-1 text-white ${color}`}>
      {icon}
      <div className="relative flex-1">{children}</div>
      <div className="relative flex h-[45px] items-center rounded-b border-t border-black/15 bg-black/[0.03] pl-5 pr-[19px] pt-px text-[12.200px] tracking-[-0.1px]">
        <span className="whitespace-nowrap pt-px">{link}</span>
        <Chevron className="ml-auto" weight={1.7} />
      </div>
    </section>
  );
}

export default function App() {
  return (
    <div className="flex h-[720px] w-[1280px] overflow-hidden bg-white font-['Open_Sans','Noto_Sans',sans-serif]">
      <Taskbar />
      <div className="flex min-w-0 flex-1 flex-col">
        <TabStrip />
        <Toolbar />
        <Bookmarks />
        <header className="flex h-14 items-center bg-[#222d32] pt-px">
          <h1 className="ml-9 whitespace-nowrap text-[19px] tracking-[-0.08px] text-white">
            <b className="text-[#c9302c]">Painel</b> Administrativo
          </h1>
          <div className="ml-auto flex items-center text-[15px] text-[#8f979c]">
            <span className="relative">
              <Icon d={P.bell} className="size-4" />
              <span className="absolute -top-[5px] left-[13px] size-[9px] rounded-full bg-[#ffc107]" />
            </span>
            <Chevron className="ml-[15px] text-[#b5babd]" weight={1.500} />
            <Icon d={P.signOut} className="ml-[34px] size-4" />
            <span className="ml-0.5 mr-6">Sair</span>
          </div>
        </header>
        <div className="flex min-h-0 flex-1">
          <Sidebar />
          <div className="flex min-w-0 flex-1 flex-col border-t-2 border-[#c5c8ca]">
            <main className="flex-1 px-[15px] pt-3.5">
              <div className="flex h-12 items-center rounded bg-[#e9ecef] pl-[15px] text-[15px] tracking-[0.08px]">
                <span className="text-[#212529]">Indicadores</span>
                <span className="px-2 text-[#868e96]">/</span>
                <span className="tracking-[0.1px] text-[#868e96]">Painel de Controle</span>
              </div>
              <div className="mt-4 grid grid-cols-3 gap-[30px]">
                <Card
                  color="bg-[#868e96]"
                  link="Pesquisar Clientes"
                  icon={<Icon d={P.user} className="absolute -right-[29px] -top-px size-20 rotate-[15deg]" />}
                >
                  <div className="pl-[133px] pt-[23px] text-[23px] font-semibold leading-8">1</div>
                  <div className="pl-[57px] pt-7 text-[15px] leading-6 tracking-[0.12px]">Total de Clientes</div>
                </Card>
                <Card
                  color="bg-[#17a2b8]"
                  link="Pesquisar Produtos"
                  icon={<Icon d={P.heart} className="absolute -right-[24px] top-0 size-20 rotate-[15deg]" />}
                >
                  <div className="pl-[133px] pt-[23px] text-[23px] font-semibold leading-8">4</div>
                  <div className="pl-[53px] pt-7 text-[15px] leading-6 tracking-[0.1px]">Total de Produtos</div>
                </Card>
                <Card
                  color="bg-[#28a745]"
                  link="Pesquisar Vendas"
                  icon={<Icon d={P.money} box="0 0 1920 1792" className="absolute -right-[23px] -top-px h-20 w-[86px] rotate-[15deg]" />}
                >
                  <div className="pl-[114px] pt-[26px] text-[14.500px] leading-6 tracking-[0.3px]">R$ 0,00</div>
                  <div className="-mt-px pl-[27px] pt-6 text-[15px] leading-6 tracking-[0.12px]">Total de Vendas (Mensal)</div>
                </Card>
              </div>
            </main>
            <footer className="flex h-14 items-center justify-center bg-[#e9ecef] pt-1 text-[12.200px] tracking-[0.06px] text-[#212529]">
              <p>
                Copyright <span className="font-['DejaVu_Sans',sans-serif] text-[12px]">{"\uFFFD"}</span> Desenvolvivdo por Tiago Oliveira - 2017
              </p>
            </footer>
          </div>
        </div>
      </div>
    </div>
  );
}
